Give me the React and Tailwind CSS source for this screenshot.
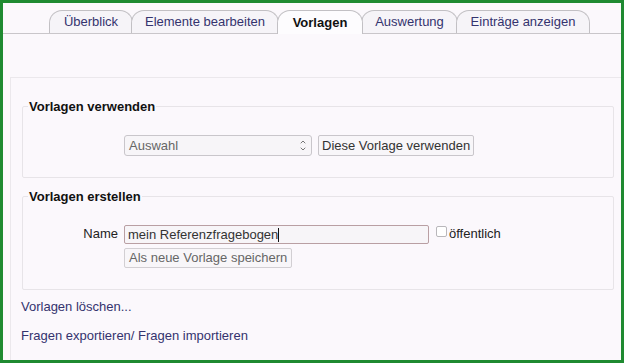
import { ChevronUp, ChevronDown } from 'lucide-react';

const TABS = [
  { label: 'Überblick', w: 'w-[84px]' },
  { label: 'Elemente bearbeiten', w: 'w-[148px]' },
  { label: 'Vorlagen', w: 'w-[86px]', active: true },
  { label: 'Auswertung', w: 'w-[97px]' },
  { label: 'Einträge anzeigen', w: 'w-[134px]' },
];

export default function App() {
  return (
    <div className="w-[624px] h-[363px] border-[3px] border-[#1f8a31] bg-[#fbf8fc] flex flex-col text-[13px] text-[#222] font-['Liberation_Sans',Arial,sans-serif]">
      {/* tabs */}
      <div className="h-[31px] pt-[8px] pl-[46px] flex items-end border-b border-[#c9c6ca]">
        {TABS.map(t => (
          <div
            key={t.label}
            className={`${t.w} -mr-[2px] h-[23px] flex items-center justify-center rounded-t-[13px] border border-b-0 border-[#c2c0c4] ${
              t.active
                ? 'bg-[#fdfcfe] font-bold text-[#111] -mb-px h-[24px] relative z-10'
                : 'bg-[#f6f4f8] text-[#34336e]'
            }`}
          >
            {t.label}
          </div>
        ))}
      </div>

      {/* content */}
      <div className="mt-[43px] ml-[7px] flex-1 border-t border-l border-[#ebe8ec] pl-[11px] pt-[21px]">
        <fieldset className="w-[592px] border border-[#e7e4e8] rounded-[2px] pb-[21px]">
          <legend className="ml-[5px] px-px font-bold text-[#111] leading-[15px]">Vorlagen verwenden</legend>
          <div className="mt-[21px] ml-[101px] flex items-center gap-[6px]">
            <div className="w-[188px] h-[21px] border border-[#c9c6cb] rounded-[3px] bg-[#f7f5f8] flex items-center justify-between pl-[4px] pr-[4px] text-[#666]">
              <span>Auswahl</span>
              <span className="flex flex-col items-center text-[#777]">
                <ChevronUp size={8} strokeWidth={3} className="-mb-[1px]" />
                <ChevronDown size={8} strokeWidth={3} />
              </span>
            </div>
            <div className="h-[21px] px-[3px] border border-[#c9c6cb] rounded-[2px] bg-[#f8f6f9] flex items-center text-[#333]">
              Diese Vorlage verwenden
            </div>
          </div>
        </fieldset>

        <fieldset className="mt-[11px] w-[592px] border border-[#e7e4e8] rounded-[2px] pb-[21px]">
          <legend className="ml-[5px] px-px font-bold text-[#111] leading-[15px]">Vorlagen erstellen</legend>
          <div className="mt-[21px] flex items-start">
            <div className="w-[95px] text-right text-[#222] leading-[18px]">Name</div>
            <div className="ml-[6px] flex flex-col gap-[4px]">
              <div className="flex items-start">
                <div className="w-[305px] h-[19px] border border-[#b99fa3] rounded-[2px] bg-[#f7f5f8] flex items-center pl-[3px] text-[#333]">
                  mein Referenzfragebogen
                  <span className="w-px h-[14px] bg-[#111]" />
                </div>
                <span className="ml-[7px] mt-[1px] w-[11px] h-[11px] border border-[#b9b7bb] rounded-[2px] bg-[#fff]" />
                <span className="ml-[2px] leading-[18px] text-[#222]">öffentlich</span>
              </div>
              <div className="w-fit h-[20px] px-[4px] border border-[#d2cfd3] rounded-[2px] bg-[#f8f6f9] flex items-center text-[#666]">
                Als neue Vorlage speichern
              </div>
            </div>
          </div>
        </fieldset>

        <div className="mt-[7px] -ml-[1px] flex flex-col gap-[9px] text-[#34336e]">
          <span>Vorlagen löschen...</span>
          <span>Fragen exportieren/ Fragen importieren</span>
        </div>
      </div>
    </div>
  );
}
